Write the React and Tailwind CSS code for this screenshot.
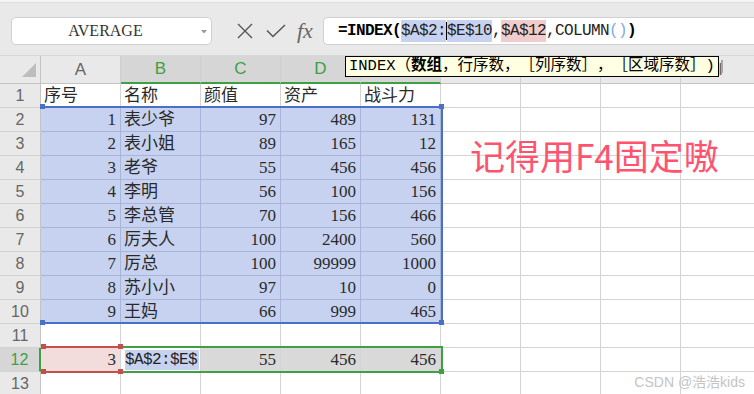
import React from 'react';

const cellFont = "font-['Liberation_Serif','Noto_Sans_CJK_SC',serif]";
const monoFont = "font-['Liberation_Mono','Noto_Sans_CJK_SC',monospace]";
const uiFont = "font-['Liberation_Sans','Noto_Sans_CJK_SC',sans-serif]";

const data = [
  ['序号', '名称', '颜值', '资产', '战斗力'],
  [1, '表少爷', 97, 489, 131],
  [2, '表小姐', 89, 165, 12],
  [3, '老爷', 55, 456, 456],
  [4, '李明', 56, 100, 156],
  [5, '李总管', 70, 156, 466],
  [6, '厉夫人', 100, 2400, 560],
  [7, '厉总', 100, 99999, 1000],
  [8, '苏小小', 97, 10, 0],
  [9, '王妈', 66, 999, 465],
  [],
  [3, '', 55, 456, 456],
  [],
];

const columns = ['A', 'B', 'C', 'D', 'E', 'F', 'G', 'H', 'I'];

const RowHead = ({ n }) => {
  const active = n === 12;
  return (
    <div
      className={`h-[24px] flex items-center justify-center border-b border-[#d2d2d2] text-[16px] ${uiFont} ${
        active
          ? 'bg-[#d6d6d6] text-[#3f9f45] border-r-2 border-r-[#3f9f45]'
          : 'bg-[#e9e9e9] text-[#666] border-r border-r-[#c4c4c4]'
      }`}
    >
      {n}
    </div>
  );
};

const Cell = ({ value, row, col }) => {
  const inBlue = row >= 2 && row <= 10 && col <= 4;
  let bg = 'bg-white border-[#d4d4d4]';
  if (inBlue) bg = 'bg-[#c6d2f0] border-[#a9b5d8]';
  if (row === 12 && col === 0) bg = 'bg-[#f3dcdc] border-[#d4d4d4]';
  if (row === 12 && col >= 2 && col <= 4) bg = 'bg-[#d9d9d9] border-[#d4d4d4]';

  if (row === 12 && col === 1) {
    return (
      <div className={`h-[24px] border-r border-b ${bg} flex items-center pl-[4px]`}>
        <span className={`${monoFont} text-[16px] tracking-[-0.6px] leading-[20px] bg-[#c6d2f0] text-[#222] pr-[2px]`}>
          $A$2:$E$
        </span>
      </div>
    );
  }

  const isNum = typeof value === 'number';
  return (
    <div
      className={`h-[24px] border-r border-b ${bg} flex items-end pb-[1px] overflow-hidden whitespace-nowrap ${cellFont} text-[17px] leading-[21px] text-[#2a2a2a] ${
        isNum ? 'justify-end pr-[4px]' : 'justify-start pl-[3px]'
      }`}
    >
      {value ?? ''}
    </div>
  );
};

const Handle = ({ className }) => (
  <div className={`absolute w-[5px] h-[5px] ${className}`} />
);

// full-width punctuation kept at full width
const Open = ({ ch }) => <span className="inline-block w-[1em] text-right">{ch}</span>;
const Close = ({ ch }) => <span className="inline-block w-[1em] text-left">{ch}</span>;

export default function App() {
  return (
    <div className="relative w-[754px] h-[394px] overflow-hidden bg-white">
      <div className="h-[3px] bg-[#f4f4f4] border-b border-[#dedede]" />

      {/* Formula bar */}
      <div className="h-[53px] bg-[#e9e9e9] flex items-start pt-[14px] border-b border-[#d8d8d8]">
        <div className="ml-[11px] w-[201px] h-[28px] bg-white border border-[#d0d0d0] rounded-[5px] flex items-center relative">
          <span className="flex-1 text-center pr-[12px] font-['Liberation_Serif',serif] text-[16px] text-[#333]">
            AVERAGE
          </span>
          <svg className="absolute right-[4px] top-[12px]" width="6" height="4" viewBox="0 0 6 4">
            <path d="M0 0 L6 0 L3 3.5 Z" fill="#9a9a9a" />
          </svg>
        </div>
        <div className="w-[111px] h-[28px] flex items-center">
          <svg className="ml-[25px]" width="16" height="16" viewBox="0 0 16 16">
            <path d="M1 1 L15 15 M15 1 L1 15" stroke="#555" strokeWidth="1.4" fill="none" />
          </svg>
          <svg className="ml-[13px]" width="20" height="14" viewBox="0 0 20 14">
            <path d="M1 6.5 L7 12.5 L19 1" stroke="#555" strokeWidth="1.5" fill="none" />
          </svg>
          <span className="ml-[11px] font-['Liberation_Serif',serif] italic text-[22px] leading-none text-[#666]">
            fx
          </span>
        </div>
        <div className={`flex-1 h-[28px] bg-white border border-r-0 border-[#d0d0d0] rounded-l-[5px] flex items-center pl-[14px] ${monoFont} text-[16px] tracking-[-0.6px] text-[#222] whitespace-nowrap`}>
          <span className="font-bold text-black">=INDEX(</span>
          <span className="bg-[#c6d2f0] leading-[22px]">$A$2:</span>
          <span className="w-px h-[18px] bg-black" />
          <span className="bg-[#c6d2f0] leading-[22px]">$E$10</span>
          <span>,</span>
          <span className="bg-[#f0cccc] leading-[22px]">$A$12</span>
          <span>,COLUMN</span>
          <span className="text-[#8aa6e0]">()</span>
          <span className="font-bold text-black">)</span>
        </div>
      </div>

      {/* Column headers */}
      <div className="grid grid-cols-[41px_repeat(9,80px)]">
        <div className="h-[28px] bg-[#e9e9e9] border-r border-b border-[#c4c4c4] relative">
          <svg className="absolute left-[22px] top-[7px]" width="14" height="14" viewBox="0 0 14 14">
            <path d="M14 0 L14 14 L0 14 Z" fill="#bdbdbd" />
          </svg>
        </div>
        {columns.map((c, i) => {
          const active = i >= 1 && i <= 4;
          return (
            <div
              key={c}
              className={`h-[28px] flex items-center justify-center border-r border-[#cfcfcf] text-[17px] ${uiFont} ${
                active
                  ? 'bg-[#d6d6d6] text-[#3f9f45] border-b-2 border-b-[#3f9f45]'
                  : 'bg-[#e9e9e9] text-[#666] border-b border-b-[#c4c4c4]'
              }`}
            >
              {c}
            </div>
          );
        })}
      </div>

      {/* Rows */}
      <div className="grid grid-cols-[41px_repeat(9,80px)]">
        {data.map((row, r) => (
          <React.Fragment key={r}>
            <RowHead n={r + 1} />
            {columns.map((c, ci) => (
              <Cell key={c} value={row[ci]} row={r + 1} col={ci} />
            ))}
          </React.Fragment>
        ))}
      </div>

      {/* Tooltip */}
      <div className={`absolute left-[345px] top-[56px] h-[21px] w-[374px] border border-black bg-[#ffffe1] pl-[3px] ${monoFont} text-[15.5px] leading-[19px] text-black whitespace-nowrap overflow-hidden`}>
        INDEX<Open ch="（" /><b>数组</b><Close ch="，" />行序数<Close ch="，" /><Open ch="［" />列序数<Close ch="］" /><Close ch="，" /><Open ch="［" />区域序数<Close ch="］" />)
      </div>
      <div className="absolute left-[721px] top-[60px] w-[2px] h-[13px] bg-[#a8a8a8]" />

      {/* Blue reference range A2:E10 */}
      <div className="absolute left-[41px] top-[106px] w-[402px] h-[218px] border-t-2 border-r-2 border-b-2 border-[#4a6fc8]" />
      <Handle className="left-[40px] top-[104px] bg-[#4a6fc8]" />
      <Handle className="left-[439px] top-[104px] bg-[#4a6fc8]" />
      <Handle className="left-[40px] top-[320px] bg-[#4a6fc8]" />
      <Handle className="left-[439px] top-[320px] bg-[#4a6fc8]" />

      {/* Red reference A12 */}
      <div className="absolute left-[42px] top-[346px] w-[79px] h-[27px] border-t-2 border-b-2 border-[#c4504e]" />
      <Handle className="left-[41px] top-[344px] bg-[#c4504e]" />
      <Handle className="left-[118px] top-[344px] bg-[#c4504e]" />
      <Handle className="left-[41px] top-[369px] bg-[#c4504e]" />
      <Handle className="left-[118px] top-[369px] bg-[#c4504e]" />

      {/* Green selection B12:E12 */}
      <div className="absolute left-[123px] top-[346px] w-[320px] h-[27px] border-t-2 border-r-2 border-b-2 border-[#3f9f45]" />
      <Handle className="left-[439px] top-[369px] bg-[#3f9f45]" />

      {/* Note */}
      <div className="absolute left-[470px] top-[137px] font-['Noto_Sans_CJK_SC',sans-serif] text-[35px] leading-none text-[#ff5370] whitespace-nowrap">
        记得用F4固定嗷
      </div>

      {/* Watermark */}
      <div className={`absolute right-[9px] top-[372px] ${uiFont} text-[14px] text-[#c4c4c4] whitespace-nowrap`}>
        CSDN @浩浩kids
      </div>
    </div>
  );
}
